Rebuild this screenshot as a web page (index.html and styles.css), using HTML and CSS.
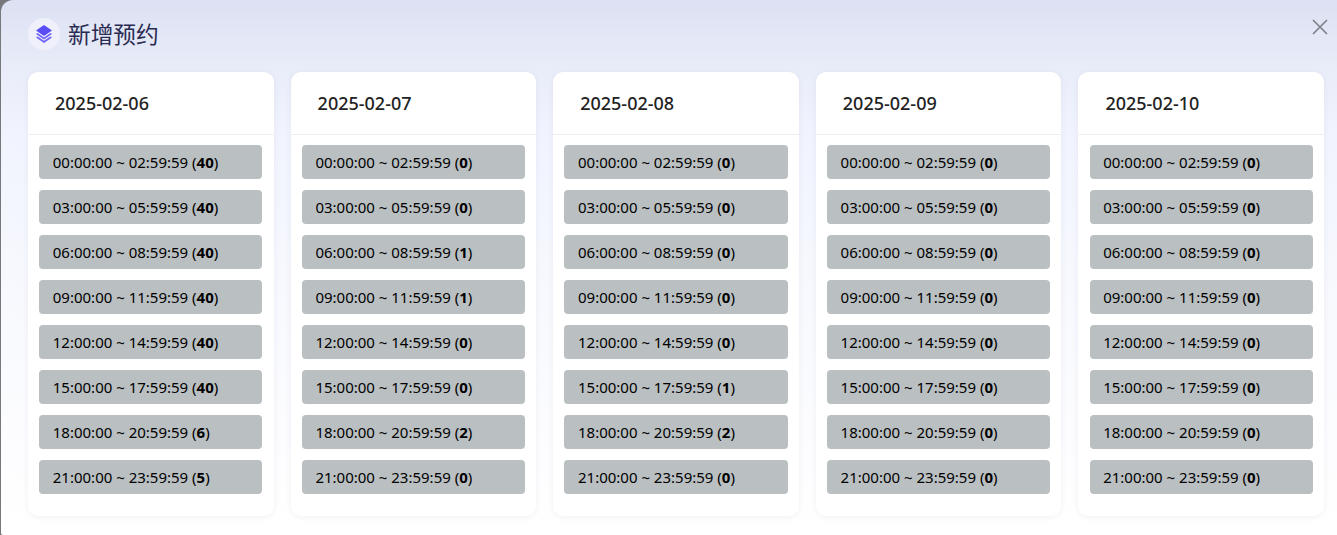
FILE: index.html
```html
<!DOCTYPE html>
<html lang="zh">
<head>
<meta charset="utf-8">
<title>新增预约</title>
<link rel="stylesheet" href="styles.css">
</head>
<body>
<div class="modal">
  <header class="head">
    <span class="logo">
      <svg width="16" height="18" viewBox="0 0 16 18"><path d="M8 0 L16 5.5 L8 11 L0 5.5 Z" fill="#5b4df5"/><path d="M1.6 8 L0 9.1 L8 14.6 L16 9.1 L14.4 8 L8 12.4 Z" fill="#6f63f7"/><path d="M1.6 11.4 L0 12.5 L8 18 L16 12.5 L14.4 11.4 L8 15.8 Z" fill="#6f63f7"/></svg>
    </span>
    <h1 class="title">新增预约</h1>
    <svg class="close" width="16" height="16" viewBox="0 0 16 16"><path d="M1 1 L15 15 M15 1 L1 15" stroke="#7d8088" stroke-width="1.6" fill="none"/></svg>
  </header>
  <div class="days">
    <section class="card">
      <div class="date">2025-02-06</div>
      <div class="slots">
        <div class="slot">00:00:00 ~ 02:59:59 (<b>40</b>)</div>
        <div class="slot">03:00:00 ~ 05:59:59 (<b>40</b>)</div>
        <div class="slot">06:00:00 ~ 08:59:59 (<b>40</b>)</div>
        <div class="slot">09:00:00 ~ 11:59:59 (<b>40</b>)</div>
        <div class="slot">12:00:00 ~ 14:59:59 (<b>40</b>)</div>
        <div class="slot">15:00:00 ~ 17:59:59 (<b>40</b>)</div>
        <div class="slot">18:00:00 ~ 20:59:59 (<b>6</b>)</div>
        <div class="slot">21:00:00 ~ 23:59:59 (<b>5</b>)</div>
      </div>
    </section>
    <section class="card">
      <div class="date">2025-02-07</div>
      <div class="slots">
        <div class="slot">00:00:00 ~ 02:59:59 (<b>0</b>)</div>
        <div class="slot">03:00:00 ~ 05:59:59 (<b>0</b>)</div>
        <div class="slot">06:00:00 ~ 08:59:59 (<b>1</b>)</div>
        <div class="slot">09:00:00 ~ 11:59:59 (<b>1</b>)</div>
        <div class="slot">12:00:00 ~ 14:59:59 (<b>0</b>)</div>
        <div class="slot">15:00:00 ~ 17:59:59 (<b>0</b>)</div>
        <div class="slot">18:00:00 ~ 20:59:59 (<b>2</b>)</div>
        <div class="slot">21:00:00 ~ 23:59:59 (<b>0</b>)</div>
      </div>
    </section>
    <section class="card">
      <div class="date">2025-02-08</div>
      <div class="slots">
        <div class="slot">00:00:00 ~ 02:59:59 (<b>0</b>)</div>
        <div class="slot">03:00:00 ~ 05:59:59 (<b>0</b>)</div>
        <div class="slot">06:00:00 ~ 08:59:59 (<b>0</b>)</div>
        <div class="slot">09:00:00 ~ 11:59:59 (<b>0</b>)</div>
        <div class="slot">12:00:00 ~ 14:59:59 (<b>0</b>)</div>
        <div class="slot">15:00:00 ~ 17:59:59 (<b>1</b>)</div>
        <div class="slot">18:00:00 ~ 20:59:59 (<b>2</b>)</div>
        <div class="slot">21:00:00 ~ 23:59:59 (<b>0</b>)</div>
      </div>
    </section>
    <section class="card">
      <div class="date">2025-02-09</div>
      <div class="slots">
        <div class="slot">00:00:00 ~ 02:59:59 (<b>0</b>)</div>
        <div class="slot">03:00:00 ~ 05:59:59 (<b>0</b>)</div>
        <div class="slot">06:00:00 ~ 08:59:59 (<b>0</b>)</div>
        <div class="slot">09:00:00 ~ 11:59:59 (<b>0</b>)</div>
        <div class="slot">12:00:00 ~ 14:59:59 (<b>0</b>)</div>
        <div class="slot">15:00:00 ~ 17:59:59 (<b>0</b>)</div>
        <div class="slot">18:00:00 ~ 20:59:59 (<b>0</b>)</div>
        <div class="slot">21:00:00 ~ 23:59:59 (<b>0</b>)</div>
      </div>
    </section>
    <section class="card">
      <div class="date">2025-02-10</div>
      <div class="slots">
        <div class="slot">00:00:00 ~ 02:59:59 (<b>0</b>)</div>
        <div class="slot">03:00:00 ~ 05:59:59 (<b>0</b>)</div>
        <div class="slot">06:00:00 ~ 08:59:59 (<b>0</b>)</div>
        <div class="slot">09:00:00 ~ 11:59:59 (<b>0</b>)</div>
        <div class="slot">12:00:00 ~ 14:59:59 (<b>0</b>)</div>
        <div class="slot">15:00:00 ~ 17:59:59 (<b>0</b>)</div>
        <div class="slot">18:00:00 ~ 20:59:59 (<b>0</b>)</div>
        <div class="slot">21:00:00 ~ 23:59:59 (<b>0</b>)</div>
      </div>
    </section>
  </div>
</div>
</body>
</html>
```
FILE: styles.css
```css
* { box-sizing: border-box; }
html, body { margin: 0; height: 100%; overflow: hidden; }
body {
  background: #77787c;
  padding-left: 1px;
  font-family: "Noto Sans", "Noto Sans CJK SC", sans-serif;
}
.modal {
  position: relative;
  height: 535px;
  padding: 15px 13px 0 27px;
  border-radius: 12px 0 0 2px;
  background: linear-gradient(180deg, #dce1f3 0, #e9edf9 70px, #f1f4fe 135px, #f8f9fe 300px, #ffffff 535px);
}
.head {
  display: flex;
  align-items: center;
  gap: 8px;
  height: 38px;
  margin-bottom: 19px;
}
.logo {
  width: 32px;
  height: 32px;
  border-radius: 50%;
  background: #f0f0fb;
  display: flex;
  align-items: center;
  justify-content: center;
}
.title {
  margin: 0;
  font-family: "Noto Sans CJK SC", sans-serif;
  font-size: 22.7px;
  line-height: 36px;
  font-weight: 400;
  color: #2a2b52;
}
.close {
  position: absolute;
  top: 19px;
  right: 9px;
}
.days {
  display: grid;
  grid-template-columns: repeat(5, 1fr);
  column-gap: 17px;
}
.card {
  height: 444px;
  background: #fff;
  border-radius: 10px;
  box-shadow: 0 1px 6px rgba(30, 40, 90, 0.06);
}
.date {
  height: 63px;
  padding-left: 27px;
  display: flex;
  align-items: center;
  font-size: 18px;
  font-weight: 500;
  color: #222;
  border-bottom: 1px solid #eeeff3;
}
.slots {
  display: flex;
  flex-direction: column;
  gap: 11px;
  padding: 10px 11.2px 0;
}
.slot {
  height: 34px;
  padding-left: 13.6px;
  display: flex;
  align-items: center;
  white-space: pre;
  background: #babfc1;
  border-radius: 4px;
  font-size: 15px;
  color: #000;
}
.slot b { font-weight: 700; }
```
